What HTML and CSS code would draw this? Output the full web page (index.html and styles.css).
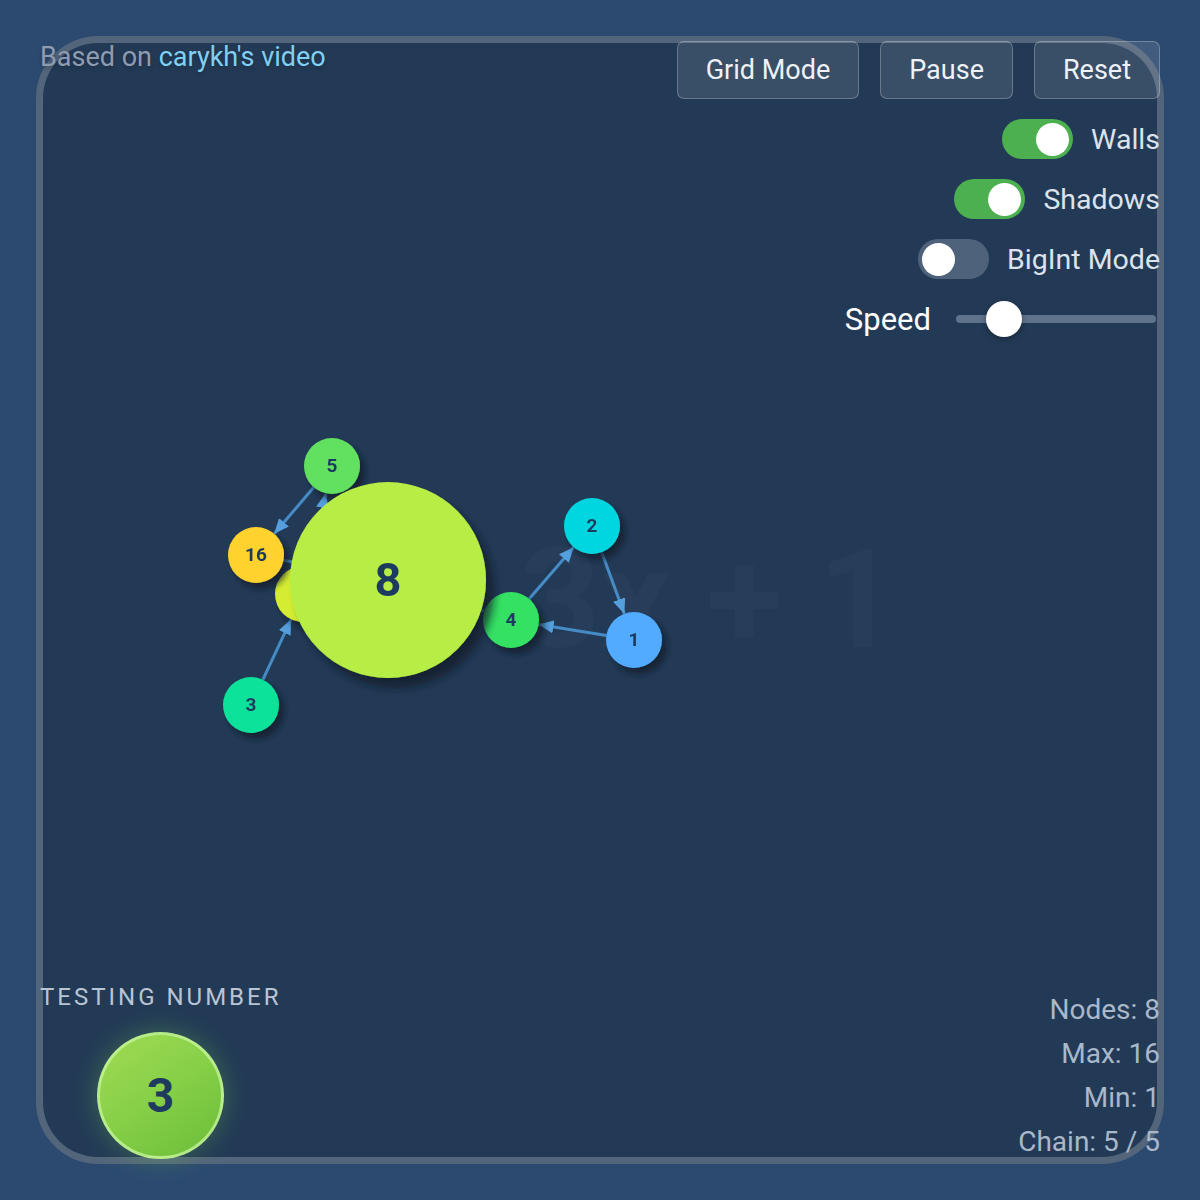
FILE: index.html
```html
<!DOCTYPE html>
<html lang="en">
<head>
  <meta charset="UTF-8" />
  <meta name="viewport" content="width=device-width, initial-scale=1.0"/>
  <title>Collatz Graph</title>
  <link rel="stylesheet" href="styles.css">
</head>
<body>
  <div class="stage">
    <div class="panel"></div>

    <svg class="graph" width="1200" height="1200" viewBox="0 0 1200 1200">
      <defs>
        <marker id="arrow" markerUnits="userSpaceOnUse" markerWidth="15" markerHeight="13" refX="15" refY="6.5" orient="auto">
          <path d="M0,0 L15,6.5 L0,13 z" class="arrow-head" />
        </marker>
        <filter id="shadow" x="-50%" y="-50%" width="200%" height="200%">
          <feDropShadow dx="5" dy="6" stdDeviation="3" flood-color="#0e1b2c" flood-opacity="0.75" />
        </filter>
        <filter id="shadow-big" x="-30%" y="-30%" width="160%" height="160%">
          <feDropShadow dx="8" dy="10" stdDeviation="4" flood-color="#0e1b2c" flood-opacity="0.75" />
        </filter>
      </defs>

      <text class="watermark" x="520" y="647">3x + 1</text>

      <!-- edges -->
      <line class="edge" x1="262.9" y1="679.7" x2="291.1" y2="619.3" marker-end="url(#arrow)" />
      <line class="edge" x1="309.2" y1="566.7" x2="325.8" y2="493.3" marker-end="url(#arrow)" />
      <line class="edge" x1="313.8" y1="487.3" x2="274.2" y2="533.7" marker-end="url(#arrow)" />
      <line class="edge" x1="283.5" y1="560.2" x2="360.5" y2="574.8" />
      <line class="edge" x1="414.6" y1="588.7" x2="484.4" y2="611.3" marker-end="url(#arrow)" />
      <line class="edge" x1="529.3" y1="598.8" x2="573.7" y2="547.2" marker-end="url(#arrow)" />
      <line class="edge" x1="601.7" y1="552.3" x2="624.3" y2="613.7" marker-end="url(#arrow)" />
      <line class="edge" x1="606.4" y1="635.5" x2="538.6" y2="624.5" marker-end="url(#arrow)" />

      <!-- nodes -->
      <g class="node" filter="url(#shadow)">
        <circle cx="303" cy="594" r="28" fill="#d4ec30" />
        <text x="303" y="600">10</text>
      </g>
      <g class="node" filter="url(#shadow)">
        <circle cx="332" cy="466" r="28" fill="#62e160" />
        <text x="332" y="472">5</text>
      </g>
      <g class="node" filter="url(#shadow)">
        <circle cx="256" cy="555" r="28" fill="#ffd22e" />
        <text x="256" y="561">16</text>
      </g>
      <g class="node" filter="url(#shadow)">
        <circle cx="251" cy="705" r="28" fill="#0fe29a" />
        <text x="251" y="711">3</text>
      </g>
      <g class="node" filter="url(#shadow)">
        <circle cx="511" cy="620" r="28" fill="#34e163" />
        <text x="511" y="626">4</text>
      </g>
      <g class="node" filter="url(#shadow)">
        <circle cx="592" cy="526" r="28" fill="#05d6e0" />
        <text x="592" y="532">2</text>
      </g>
      <g class="node" filter="url(#shadow)">
        <circle cx="634" cy="640" r="28" fill="#52abff" />
        <text x="634" y="646">1</text>
      </g>
      <g class="node node-big" filter="url(#shadow-big)">
        <circle cx="388" cy="580" r="98" fill="#b6ee44" />
        <text x="388" y="596">8</text>
      </g>
    </svg>

    <div class="hud">
      <div class="hud-top">
        <div class="credit">Based on <a href="#">carykh's video</a></div>

        <div class="controls">
          <div class="buttons">
            <button class="btn">Grid Mode</button>
            <button class="btn">Pause</button>
            <button class="btn">Reset</button>
          </div>

          <label class="toggle-row">
            <span class="toggle on"><span class="knob"></span></span>
            Walls
          </label>
          <label class="toggle-row">
            <span class="toggle on"><span class="knob"></span></span>
            Shadows
          </label>
          <label class="toggle-row">
            <span class="toggle"><span class="knob"></span></span>
            BigInt Mode
          </label>

          <div class="speed">
            <span class="speed-label">Speed</span>
            <input type="range" min="0" max="100" value="18" />
          </div>
        </div>
      </div>

      <div class="hud-bottom">
        <div class="testing">
          <div class="testing-label">TESTING NUMBER</div>
          <div class="testing-ball">3</div>
        </div>

        <div class="stats">
          <div>Nodes: 8</div>
          <div>Max: 16</div>
          <div>Min: 1</div>
          <div>Chain: 5 / 5</div>
        </div>
      </div>
    </div>
  </div>
</body>
</html>
```

FILE: styles.css
```css
body {
  margin: 0;
  padding: 0;
  background-color: #2c4a70;
  font-family: Roboto, "Liberation Sans", sans-serif;
}
.stage {
  position: relative;
  width: 1200px;
  height: 1200px;
  padding: 36px;
  box-sizing: border-box;
}
.panel {
  height: 100%;
  box-sizing: border-box;
  border: 7px solid rgba(255, 255, 255, 0.22);
  border-radius: 62px;
  background-color: #233a56;
}
.graph {
  position: absolute;
  top: 0;
  left: 0;
}
.watermark {
  font-family: Roboto, sans-serif;
  font-weight: 700;
  font-size: 140px;
  fill: rgba(255, 255, 255, 0.018);
}
.edge {
  stroke: #4b9ad8;
  stroke-opacity: 0.85;
  stroke-width: 3;
}
.arrow-head {
  fill: #559fdc;
}
.node text {
  font-family: Roboto, sans-serif;
  font-weight: 700;
  font-size: 19px;
  fill: #1e3a5f;
  text-anchor: middle;
}
.node-big text {
  font-size: 47px;
}

.hud {
  position: absolute;
  top: 40px;
  left: 40px;
  right: 40px;
  bottom: 36px;
  display: flex;
  flex-direction: column;
  justify-content: space-between;
}
.hud-top {
  display: flex;
  justify-content: space-between;
  align-items: flex-start;
}
.credit {
  font-size: 27px;
  line-height: 34px;
  color: #8e9cb0;
  text-shadow: 0 2px 4px rgba(0, 0, 0, 0.25);
}
.credit a {
  color: #7fd0f2;
  text-decoration: none;
}
.controls {
  display: flex;
  flex-direction: column;
  align-items: flex-end;
  gap: 20px;
}
.buttons {
  display: flex;
  gap: 21px;
  margin-top: 1px;
}
.btn {
  font-family: Roboto, sans-serif;
  font-size: 27px;
  line-height: 32px;
  padding: 12px 28px;
  color: #eef2f7;
  background-color: rgba(255, 255, 255, 0.1);
  border: 1.5px solid rgba(255, 255, 255, 0.25);
  border-radius: 7px;
}
.toggle-row {
  display: flex;
  align-items: center;
  gap: 18px;
  font-size: 28.5px;
  color: #dce3ec;
  height: 40px;
}
.toggle {
  display: flex;
  align-items: center;
  width: 71px;
  height: 40px;
  padding: 4px;
  box-sizing: border-box;
  border-radius: 20px;
  background-color: #4f627c;
}
.toggle.on {
  background-color: #4caf50;
  justify-content: flex-end;
}
.knob {
  width: 33px;
  height: 33px;
  border-radius: 50%;
  background-color: #fff;
}
.speed {
  display: flex;
  align-items: center;
  gap: 25px;
  height: 40px;
  margin-right: 4px;
}
.speed-label {
  font-size: 31px;
  color: #fff;
}
.speed input {
  -webkit-appearance: none;
  appearance: none;
  width: 200px;
  height: 8px;
  margin: 0;
  border-radius: 4px;
  background-color: #5e728c;
}
.speed input::-webkit-slider-thumb {
  -webkit-appearance: none;
  width: 36px;
  height: 36px;
  border-radius: 50%;
  background-color: #fff;
  box-shadow: 0 2px 6px rgba(0, 0, 0, 0.35);
}

.hud-bottom {
  display: flex;
  justify-content: space-between;
  align-items: flex-end;
}
.testing {
  display: flex;
  flex-direction: column;
  align-items: flex-start;
  margin-bottom: 5px;
}
.testing-label {
  font-size: 24px;
  line-height: 30px;
  letter-spacing: 3px;
  color: #b9c5d5;
}
.testing-ball {
  margin: 20px 0 0 57px;
  width: 127px;
  height: 127px;
  box-sizing: border-box;
  border-radius: 50%;
  border: 3px solid rgba(200, 245, 160, 0.75);
  background: linear-gradient(145deg, #a0dc54 0%, #86cf47 50%, #6bbd39 100%);
  box-shadow: 0 0 26px rgba(120, 220, 80, 0.3);
  display: flex;
  align-items: center;
  justify-content: center;
  font-size: 48px;
  font-weight: 700;
  color: #1e3a5f;
}
.stats {
  text-align: right;
  font-size: 28px;
  line-height: 44px;
  color: #a9b8ca;
}
```
